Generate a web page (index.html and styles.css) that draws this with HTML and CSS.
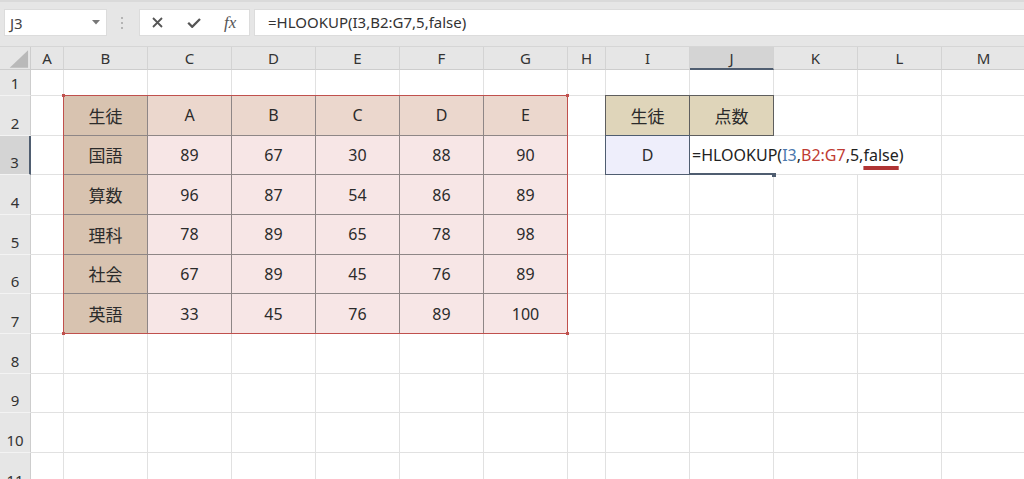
FILE: index.html
```html
<!DOCTYPE html>
<html lang="ja">
<head>
<meta charset="UTF-8" />
<meta name="viewport" content="width=device-width,initial-scale=1" />
<title>HLOOKUP</title>
<link rel="stylesheet" href="styles.css">
</head>
<body>

<!-- formula bar -->
<div class="topbar">
  <div class="namebox">
    <span>J3</span>
    <svg width="8" height="5" viewBox="0 0 8 5"><path d="M0 0h8L4 4.5z" fill="#777"/></svg>
  </div>
  <div class="grip"><i></i><i></i><i></i></div>
  <div class="tools">
    <svg width="11" height="11" viewBox="0 0 11 11"><path d="M1 1l9 9M10 1l-9 9" stroke="#555" stroke-width="1.8" fill="none"/></svg>
    <svg width="14" height="10" viewBox="0 0 14 10"><path d="M1.2 4.8l4 4L13 1" stroke="#555" stroke-width="2.3" fill="none"/></svg>
    <span class="fx">fx</span>
  </div>
  <div class="formula">=HLOOKUP(I3,B2:G7,5,false)</div>
</div>

<!-- sheet -->
<div class="sheet">
  <div class="ch corner"><svg width="31" height="23" viewBox="0 0 31 23"><path d="M10 21H29V3z" fill="#b9b9b9"/></svg></div>
  <div class="ch">A</div><div class="ch">B</div><div class="ch">C</div><div class="ch">D</div>
  <div class="ch">E</div><div class="ch">F</div><div class="ch">G</div><div class="ch">H</div>
  <div class="ch">I</div><div class="ch sel">J</div><div class="ch">K</div><div class="ch">L</div><div class="ch">M</div>

  <div class="rh">1</div>
  <div class="c"></div><div class="c"></div><div class="c"></div><div class="c"></div><div class="c"></div><div class="c"></div><div class="c"></div>
  <div class="c"></div><div class="c"></div><div class="c"></div><div class="c"></div><div class="c"></div><div class="c"></div>

  <div class="rh">2</div>
  <div class="c"></div><div class="c"></div><div class="c"></div><div class="c"></div><div class="c"></div>

  <div class="rh sel">3</div>
  <div class="c"></div><div class="c"></div><div class="c"></div>

  <div class="rh">4</div>
  <div class="c"></div><div class="c"></div><div class="c"></div><div class="c"></div><div class="c"></div><div class="c"></div><div class="c"></div>
  <div class="rh">5</div>
  <div class="c"></div><div class="c"></div><div class="c"></div><div class="c"></div><div class="c"></div><div class="c"></div><div class="c"></div>
  <div class="rh">6</div>
  <div class="c"></div><div class="c"></div><div class="c"></div><div class="c"></div><div class="c"></div><div class="c"></div><div class="c"></div>
  <div class="rh">7</div>
  <div class="c"></div><div class="c"></div><div class="c"></div><div class="c"></div><div class="c"></div><div class="c"></div><div class="c"></div>

  <div class="rh">8</div>
  <div class="c"></div><div class="c"></div><div class="c"></div><div class="c"></div><div class="c"></div><div class="c"></div><div class="c"></div>
  <div class="c"></div><div class="c"></div><div class="c"></div><div class="c"></div><div class="c"></div><div class="c"></div>
  <div class="rh">9</div>
  <div class="c"></div><div class="c"></div><div class="c"></div><div class="c"></div><div class="c"></div><div class="c"></div><div class="c"></div>
  <div class="c"></div><div class="c"></div><div class="c"></div><div class="c"></div><div class="c"></div><div class="c"></div>
  <div class="rh">10</div>
  <div class="c"></div><div class="c"></div><div class="c"></div><div class="c"></div><div class="c"></div><div class="c"></div><div class="c"></div>
  <div class="c"></div><div class="c"></div><div class="c"></div><div class="c"></div><div class="c"></div><div class="c"></div>
  <div class="rh">11</div>
  <div class="c"></div><div class="c"></div><div class="c"></div><div class="c"></div><div class="c"></div><div class="c"></div><div class="c"></div>
  <div class="c"></div><div class="c"></div><div class="c"></div><div class="c"></div><div class="c"></div><div class="c"></div>

  <!-- B2:G7 score table -->
  <div class="score">
    <div class="lbl">生徒</div><div class="hd">A</div><div class="hd">B</div><div class="hd">C</div><div class="hd">D</div><div class="hd">E</div>
    <div class="lbl">国語</div><div>89</div><div>67</div><div>30</div><div>88</div><div>90</div>
    <div class="lbl">算数</div><div>96</div><div>87</div><div>54</div><div>86</div><div>89</div>
    <div class="lbl">理科</div><div>78</div><div>89</div><div>65</div><div>78</div><div>98</div>
    <div class="lbl">社会</div><div>67</div><div>89</div><div>45</div><div>76</div><div>89</div>
    <div class="lbl">英語</div><div>33</div><div>45</div><div>76</div><div>89</div><div>100</div>
    <span class="dot tl"></span><span class="dot tr"></span><span class="dot bl"></span><span class="dot br"></span>
  </div>

  <!-- I2:J3 lookup -->
  <div class="lk head i-col">生徒</div>
  <div class="lk head j-col">点数</div>
  <div class="lk key">D</div>
  <div class="edit">=HLOOKUP(<span class="ref-b">I3</span>,<span class="ref-r">B2:G7</span>,5,<span class="err">false</span>)<span class="handle"></span></div>
</div>

</body>
</html>
```

FILE: styles.css
```css
:root{
  --grid:#e1e1e1; --hdr:#e6e6e6; --hdr-sel:#d4d4d4; --sel:#4f5d70;
  --red:#c0504d; --ink:#2b2b2b;
}
*{box-sizing:border-box;margin:0;padding:0}

body{
  font-family:"Noto Sans","Noto Sans CJK JP",sans-serif;
  color:var(--ink);
  background:#fff;
  overflow:hidden;
  height:100vh;
}

/* ----------  formula bar  ---------- */
.topbar{
  display:flex;
  align-items:flex-start;
  height:47px;
  padding:9px 0 0 4px;
  background:var(--hdr);
  box-shadow:inset 0 2px #dadada;
  border-bottom:1px solid #d6d6d6;
}
.namebox{
  width:103px;height:27px;
  background:#fff;
  border:1px solid #dcdcdc;
  display:flex;align-items:center;justify-content:space-between;
  padding:0 6px 0 5px;
  font-size:15px;color:#444;
}
.grip{
  display:flex;flex-direction:column;gap:3px;
  margin:8px 0 0 14px;
}
.grip i{display:block;width:2px;height:2px;background:#b4b4b4}
.tools{
  width:111px;height:27px;margin-left:16px;
  background:#fff;border:1px solid #dcdcdc;
  display:flex;align-items:center;
  padding-left:12px;gap:24px;
}
.fx{
  font-family:"Liberation Serif",serif;font-style:italic;
  font-size:17px;color:#555;margin-left:-1px;
}
.formula{
  flex:1;height:27px;margin-left:4px;
  background:#fff;border:1px solid #dcdcdc;border-right:none;
  padding-left:13px;
  font-size:15px;line-height:25px;color:#333;
}

/* ----------  sheet grid  ---------- */
.sheet{
  display:grid;
  grid-template-columns:31px 33px repeat(6,84px) 38px repeat(5,84px);
  grid-template-rows:23px 26px repeat(10,39.67px);
}
.ch{
  background:var(--hdr);
  border-right:1px solid #d3d3d3;
  border-bottom:1px solid #cdcdcd;
  display:flex;align-items:center;justify-content:center;
  font-size:15px;color:#333;
}
.ch.corner{border-right-color:#cdcdcd}
.ch.sel{background:var(--hdr-sel);border-bottom:2px solid var(--sel)}
.rh{
  grid-column:1;
  background:var(--hdr);
  border-right:1px solid #cdcdcd;
  border-bottom:1px solid #f3f3f3;
  display:flex;align-items:flex-end;justify-content:center;
  padding-bottom:2px;
  font-size:15px;color:#333;
}
.rh.sel{background:var(--hdr-sel);border-right:2px solid var(--sel)}
.c{border-right:1px solid var(--grid);border-bottom:1px solid var(--grid)}

/* ----------  score table  ---------- */
.score{
  grid-column:3/9;grid-row:3/9;
  margin:-1px 0 0 -1px;
  border:1px solid var(--red);
  display:grid;
  grid-template-columns:repeat(5,84px) 1fr;
  grid-template-rows:repeat(5,39.67px) 1fr;
  position:relative;
}
.score>div{
  display:flex;align-items:center;justify-content:center;
  background:#f7e6e6;
  border-right:1px solid #8e8686;
  border-bottom:1px solid #8e8686;
  font-size:16px;
}
.score>div:nth-child(6n){border-right:none}
.score>div:nth-child(n+31){border-bottom:none}
.score>.hd{background:#ebd7cd}
.score>.lbl{background:#d8c3b0;font-size:17px}
.dot{position:absolute;width:3px;height:3px;background:var(--red)}
.dot.tl{left:-2px;top:-2px}
.dot.tr{right:-2px;top:-2px}
.dot.bl{left:-2px;bottom:-2px}
.dot.br{right:-2px;bottom:-2px}

/* ----------  lookup table  ---------- */
.lk{
  margin:-1px 0 0 -1px;
  border:1px solid #5e5e5e;
  display:flex;align-items:center;justify-content:center;
  font-size:16px;
}
.lk.head{grid-row:3;background:#dfd5ba;font-size:17px}
.lk.i-col{grid-column:10}
.lk.j-col{grid-column:11}
.lk.key{grid-column:10;grid-row:4;background:#eeeefb;border-color:var(--sel)}
.edit{
  grid-column:11/14;grid-row:4;
  position:relative;
  display:flex;align-items:center;
  padding-left:2px;
  white-space:nowrap;
  font-size:16px;color:#222;
  border-right:1px solid var(--grid);
  background:
    linear-gradient(var(--sel),var(--sel)) 0 100%/84px 2px no-repeat,
    linear-gradient(var(--grid),var(--grid)) 0 100%/100% 1px no-repeat;
}
.ref-b{color:#4a78ad}
.ref-r{color:#bf3b33}
.err{
  text-decoration:underline #b03434;
  text-decoration-thickness:4px;
  text-underline-offset:5px;
  text-decoration-skip-ink:none;
}
.handle{position:absolute;left:82px;bottom:-2px;width:4px;height:4px;background:var(--sel)}
```
